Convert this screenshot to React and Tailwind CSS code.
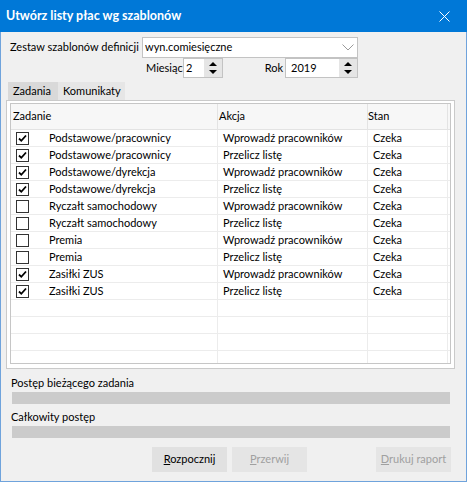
import React from 'react';

const rows = [
  { on: true, task: 'Podstawowe/pracownicy', action: 'Wprowadź pracowników' },
  { on: true, task: 'Podstawowe/pracownicy', action: 'Przelicz listę' },
  { on: true, task: 'Podstawowe/dyrekcja', action: 'Wprowadź pracowników' },
  { on: true, task: 'Podstawowe/dyrekcja', action: 'Przelicz listę' },
  { on: false, task: 'Ryczałt samochodowy', action: 'Wprowadź pracowników' },
  { on: false, task: 'Ryczałt samochodowy', action: 'Przelicz listę' },
  { on: false, task: 'Premia', action: 'Wprowadź pracowników' },
  { on: false, task: 'Premia', action: 'Przelicz listę' },
  { on: true, task: 'Zasiłki ZUS', action: 'Wprowadź pracowników' },
  { on: true, task: 'Zasiłki ZUS', action: 'Przelicz listę' },
];

function SpinArrows() {
  return (
    <div className="w-[18px] h-full bg-[#e5e5e5] flex flex-col items-center justify-center gap-[4px]">
      <svg width="8" height="4" viewBox="0 0 8 4"><path d="M0 4 L4 0 L8 4 Z" fill="#000" /></svg>
      <svg width="8" height="4" viewBox="0 0 8 4"><path d="M0 0 L8 0 L4 4 Z" fill="#000" /></svg>
    </div>
  );
}

function Checkbox({ on }) {
  return (
    <div className="w-[13px] h-[13px] border border-[#333] bg-white flex items-center justify-center">
      {on && (
        <svg width="11" height="11" viewBox="0 0 11 11">
          <path d="M2 5.5 L4.3 7.8 L9 2.5" fill="none" stroke="#000" strokeWidth="1.8" />
        </svg>
      )}
    </div>
  );
}

export default function App() {
  return (
    <div className="w-[467px] h-[482px] flex flex-col [font-family:Lato,sans-serif] text-[11px] text-black">
      {/* title bar */}
      <div className="h-[32px] bg-[#0078d7] flex items-center text-white">
        <div className="pl-[6px] flex-1 font-bold text-[12.5px]">Utwórz listy płac wg szablonów</div>
        <div className="w-[46px] h-full flex items-center justify-center">
          <svg width="11" height="11" viewBox="0 0 11 11">
            <path d="M0.5 0.5 L10.5 10.5 M10.5 0.5 L0.5 10.5" stroke="#fff" strokeWidth="1" />
          </svg>
        </div>
      </div>

      <div className="flex-1 bg-[#f0f0f0] border-x border-b border-[#6fa3dc] flex flex-col">
        {/* template set */}
        <div className="mt-[5px] h-[21px] flex items-center">
          <div className="ml-[9px] w-[132px]">Zestaw szablonów definicji</div>
          <div className="w-[216px] h-full border border-[#c3c3c3] bg-white flex items-center pl-[2px] pr-[3px]">
            <span className="flex-1">wyn.comiesięczne</span>
            <svg width="12" height="7" viewBox="0 0 12 7">
              <path d="M0.5 0.5 L6 6 L11.5 0.5" fill="none" stroke="#9a9a9a" strokeWidth="1" />
            </svg>
          </div>
        </div>

        {/* month / year */}
        <div className="h-[20px] flex items-center">
          <div className="ml-[145px] w-[37px]">Miesiąc</div>
          <div className="w-[40px] h-full border border-[#c3c3c3] bg-white flex items-center pl-[2px]">
            <span className="flex-1">2</span>
            <SpinArrows />
          </div>
          <div className="w-[62px] text-right pr-[2px]">Rok</div>
          <div className="w-[73px] h-full border border-[#c3c3c3] bg-white flex items-center pl-[5px]">
            <span className="flex-1">2019</span>
            <SpinArrows />
          </div>
        </div>

        {/* tabs */}
        <div className="mt-[4px] ml-[7px] h-[18px] flex">
          <div className="w-[50px] bg-[#d9d9d9] pl-[5px] flex items-center">Zadania</div>
          <div className="w-[67px] bg-[#e6e6e6] pl-[5px] flex items-center">Komunikaty</div>
        </div>

        {/* tab panel */}
        <div className="ml-[5px] w-[449px] h-[269px] border border-[#cacaca] bg-white pt-[2px] px-[3px] pb-[4px] flex">
          <div className="flex-1 border border-[#c6c6c6] bg-white overflow-hidden">
            <div className="h-[26px] flex bg-[#f7f7f7] border-b border-[#e3e3e3]">
              <div className="w-[207px] border-r border-[#e3e3e3] pl-[2px] flex items-center">Zadanie</div>
              <div className="w-[150px] border-r border-[#e3e3e3] pl-[1px] flex items-center">Akcja</div>
              <div className="w-[80px] border-r border-[#e3e3e3] flex items-center">Stan</div>
            </div>
            {rows.map((r, i) => (
              <div key={i} className="h-[17px] flex border-b border-[#ececec]">
                <div className="w-[207px] border-r border-[#ececec] pl-[5px] flex items-center">
                  <Checkbox on={r.on} />
                  <span className="ml-[20px]">{r.task}</span>
                </div>
                <div className="w-[150px] border-r border-[#ececec] pl-[5px] flex items-center">{r.action}</div>
                <div className="w-[80px] border-r border-[#ececec] pl-[5px] flex items-center">Czeka</div>
              </div>
            ))}
            {[0, 1, 2, 3].map((i) => (
              <div key={'e' + i} className="h-[17px] flex border-b border-[#ececec]">
                <div className="w-[207px] border-r border-[#ececec]" />
                <div className="w-[150px] border-r border-[#ececec]" />
                <div className="w-[80px] border-r border-[#ececec]" />
              </div>
            ))}
          </div>
        </div>

        {/* progress */}
        <div className="mt-[6px] ml-[10px] h-[16px] leading-[16px]">Postęp bieżącego zadania</div>
        <div className="mt-[1px] ml-[11px] w-[438px] h-[12px] bg-[#cbcbcb]" />
        <div className="mt-[5px] ml-[10px] h-[16px] leading-[16px]">Całkowity postęp</div>
        <div className="mt-[1px] ml-[11px] w-[438px] h-[12px] bg-[#cbcbcb]" />

        {/* buttons */}
        <div className="mt-[9px] ml-[151px] h-[25px] flex">
          <button className="w-[75px] h-full bg-[#e1e1e1] flex items-center justify-center">
            <span><span className="underline">R</span>ozpocznij</span>
          </button>
          <button className="ml-[5px] w-[75px] h-full bg-[#e5e5e5] text-[#a0a0a0] flex items-center justify-center">
            <span><span className="underline">P</span>rzerwij</span>
          </button>
          <button className="ml-[69px] w-[75px] h-full bg-[#e5e5e5] text-[#a0a0a0] flex items-center justify-center">
            <span><span className="underline">D</span>rukuj raport</span>
          </button>
        </div>
      </div>
    </div>
  );
}
